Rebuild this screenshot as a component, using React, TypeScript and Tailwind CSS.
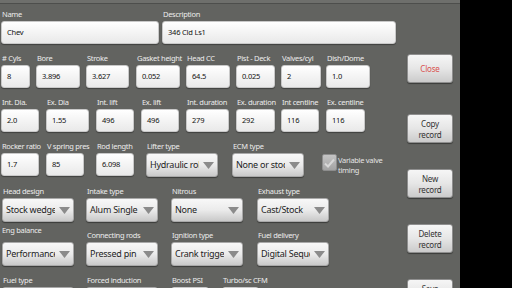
import type { ReactNode } from "react";

// labelled text box
function TextField({ label, value, cell, box }: { label: string; value: string; cell: string; box: string }) {
  return (
    <div className={`${cell} shrink-0 flex flex-col`}>
      <div className="h-[12px] leading-[12px] text-[7.5px] tracking-[-0.3px] text-[#ececec] whitespace-nowrap pl-[1px]">{label}</div>
      <div
        className={`${box} mt-[1px] h-[23px] rounded-[3px] bg-gradient-to-b from-[#ffffff] to-[#e9e9e9] border border-[#c9c9c9] shadow-[0_1px_1px_rgba(0,0,0,0.35)] flex items-center pl-[5px] text-[7.5px] tracking-[-0.2px] text-[#111] whitespace-nowrap overflow-hidden`}
      >
        {value}
      </div>
    </div>
  );
}

function Spinner({ label, value, cell, labelClass = "" }: { label: string; value: string; cell: string; labelClass?: string }) {
  return (
    <div className={`${cell} shrink-0 flex flex-col`}>
      <div className={`h-[12px] leading-[12px] text-[7.5px] tracking-[-0.3px] text-[#ececec] whitespace-nowrap pl-[1px] ${labelClass}`}>{label}</div>
      <div className="w-[72px] mt-[1px] h-[24px] rounded-[3px] bg-gradient-to-b from-[#f8f8f8] via-[#ebebeb] to-[#c9c9c9] border border-[#a9a9a9] shadow-[0_1px_1px_rgba(0,0,0,0.4)] flex items-center">
        <div className="w-[52px] pl-[3px] text-[9px] tracking-[-0.25px] text-[#1d1d1d] whitespace-nowrap overflow-hidden">{value}</div>
        <svg width="11" height="7" viewBox="0 0 11 7" className="ml-[4px]">
          <path d="M0 0 H11 L5.5 7 Z" fill="#8b8b8b" />
        </svg>
      </div>
    </div>
  );
}

function Row({ children, className = "" }: { children: ReactNode; className?: string }) {
  return <div className={`flex ${className}`}>{children}</div>;
}

function SideButton({ children, className = "" }: { children: ReactNode; className?: string }) {
  return (
    <button
      className={`w-[46px] h-[29px] rounded-[3px] bg-gradient-to-b from-[#f6f6f6] via-[#e6e6e6] to-[#cbcbcb] border border-[#8f8f8f] shadow-[0_1px_1px_rgba(0,0,0,0.4)] text-[8px] tracking-[-0.2px] leading-[11px] text-[#333] flex flex-col items-center justify-center ${className}`}
    >
      {children}
    </button>
  );
}

export default function App() {
  return (
    <div className="w-[512px] h-[288px] overflow-hidden flex bg-black" style={{ fontFamily: '"Noto Sans", "Open Sans", sans-serif' }}>
      <div className="w-[460px] h-full bg-[#626360] flex flex-col">
        <div className="h-[4px] bg-[#6e6f6c] border-b border-[#4d4e4c] shrink-0" />
        <div className="flex pt-[4px]">
          {/* form */}
          <div className="w-[403px] shrink-0 flex flex-col gap-[8px]">
            <Row className="pl-[1px]">
              <TextField label="Name" value="Chev" cell="w-[161px]" box="w-[158px]" />
              <TextField label="Description" value="346 Cld Ls1" cell="w-[236px]" box="w-[234px]" />
            </Row>
            <Row className="pl-[1px]">
              <TextField label="# Cyls" value="8" cell="w-[35px]" box="w-[29px]" />
              <TextField label="Bore" value="3.896" cell="w-[50px]" box="w-[44px]" />
              <TextField label="Stroke" value="3.627" cell="w-[50px]" box="w-[43px]" />
              <TextField label="Gasket height" value="0.052" cell="w-[50px]" box="w-[44px]" />
              <TextField label="Head CC" value="64.5" cell="w-[50px]" box="w-[44px]" />
              <TextField label="Pist - Deck" value="0.025" cell="w-[45px]" box="w-[39px]" />
              <TextField label="Valves/cyl" value="2" cell="w-[45px]" box="w-[40px]" />
              <TextField label="Dish/Dome" value="1.0" cell="w-[50px]" box="w-[44px]" />
            </Row>
            <Row className="pl-[1px]">
              <TextField label="Int. Dia." value="2.0" cell="w-[45px]" box="w-[38px]" />
              <TextField label="Ex. Dia" value="1.55" cell="w-[50px]" box="w-[43px]" />
              <TextField label="Int. lift" value="496" cell="w-[45px]" box="w-[38px]" />
              <TextField label="Ex. lift" value="496" cell="w-[45px]" box="w-[38px]" />
              <TextField label="Int. duration" value="279" cell="w-[50px]" box="w-[43px]" />
              <TextField label="Ex. duration" value="292" cell="w-[45px]" box="w-[39px]" />
              <TextField label="Int centline" value="116" cell="w-[45px]" box="w-[38px]" />
              <TextField label="Ex. centline" value="116" cell="w-[50px]" box="w-[39px]" />
            </Row>
            <Row className="pl-[1px]">
              <TextField label="Rocker ratio" value="1.7" cell="w-[45px]" box="w-[38px]" />
              <TextField label="V spring pres" value="85" cell="w-[50px]" box="w-[38px]" />
              <TextField label="Rod length" value="6.098" cell="w-[50px]" box="w-[38px]" />
              <Spinner label="Lifter type" value="Hydraulic roller" cell="w-[86px]" />
              <Spinner label="ECM type" value="None or stock" cell="w-[90px]" />
              <div className="flex items-start mt-[14px]">
                <div className="w-[15px] h-[17px] rounded-[2px] bg-gradient-to-b from-[#c4c4c4] to-[#a3a3a3] border border-[#8d8d8d] flex items-center justify-center">
                  <svg width="11" height="10" viewBox="0 0 11 10">
                    <path d="M1 5.5 L4 8.5 L10 1.5" fill="none" stroke="#d8d8d8" strokeWidth="2" />
                  </svg>
                </div>
                <div className="ml-[1px] text-[7.5px] tracking-[-0.3px] leading-[10px] text-[#e4e4e4] mt-[1px]">
                  Variable valve
                  <br />
                  timing
                </div>
              </div>
            </Row>
            <Row className="pl-[2px]">
              <Spinner label="Head design" value="Stock wedge" cell="w-[84px]" />
              <Spinner label="Intake type" value="Alum Single plane" cell="w-[85px]" />
              <Spinner label="Nitrous" value="None" cell="w-[86px]" />
              <Spinner label="Exhaust type" value="Cast/Stock" cell="w-[86px]" />
            </Row>
            <Row className="pl-[2px] -mt-[1px]">
              <Spinner label="Eng balance" value="Performance" cell="w-[84px]" labelClass="relative -top-[5px] -left-[1px]" />
              <Spinner label="Connecting rods" value="Pressed pin" cell="w-[85px]" />
              <Spinner label="Ignition type" value="Crank trigger" cell="w-[86px]" />
              <Spinner label="Fuel delivery" value="Digital Sequential" cell="w-[86px]" />
            </Row>
            <Row className="pl-[2px]">
              <Spinner label="Fuel type" value="" cell="w-[84px]" />
              <Spinner label="Forced induction" value="" cell="w-[85px]" />
              <TextField label="Boost PSI" value="" cell="w-[51px]" box="w-[38px]" />
              <TextField label="Turbo/sc CFM" value="" cell="w-[60px]" box="w-[37px]" />
            </Row>
          </div>
          {/* buttons */}
          <div className="w-[46px] ml-[4px] flex flex-col pt-[46px]">
            <SideButton className="text-[#d9534f]">Close</SideButton>
            <SideButton className="mt-[31px]">
              <span>Copy</span>
              <span>record</span>
            </SideButton>
            <SideButton className="mt-[26px]">
              <span>New</span>
              <span>record</span>
            </SideButton>
            <SideButton className="mt-[26px]">
              <span>Delete</span>
              <span>record</span>
            </SideButton>
            <SideButton className="mt-[26px]">
              <span>Save</span>
              <span>record</span>
            </SideButton>
          </div>
        </div>
      </div>
      <div className="flex-1 bg-black" />
    </div>
  );
}
